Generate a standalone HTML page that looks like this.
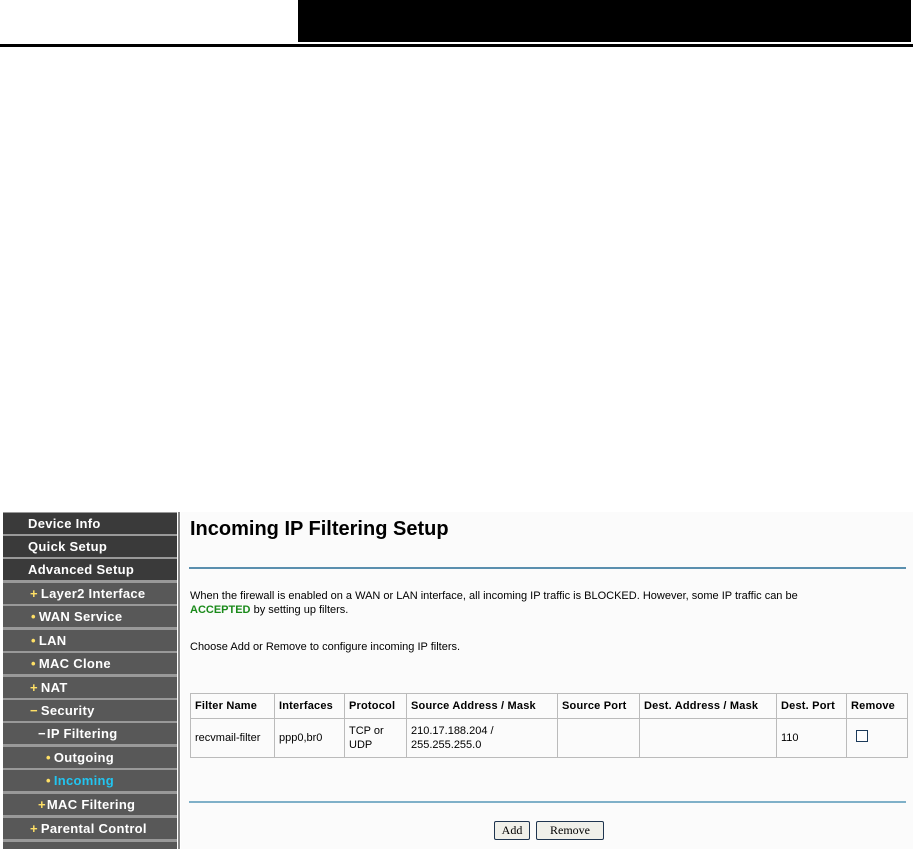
<!DOCTYPE html>
<html><head><style>
*{box-sizing:border-box}
body{margin:0;width:913px;height:849px;overflow:hidden;background:#fff;font-family:"Liberation Sans",sans-serif;position:relative}
.blk{position:absolute;left:298px;top:0;width:613px;height:42px;background:#000}
.ln{position:absolute;left:0;top:44px;width:913px;height:3px;background:#000}
.side{position:absolute;left:3px;top:512px;width:174px;height:337px;background:#999;overflow:hidden}
.it{position:absolute;left:0;width:174px;height:21px;color:#fff;font-weight:bold;font-size:13px;line-height:21px;white-space:nowrap;letter-spacing:0.3px}
.d{background:#3a3a3a}.m{background:#585858}
.b{color:#ffe066;margin-right:3px}
.vr{position:absolute;left:178px;top:512px;width:2px;height:337px;background:#888}
.main{position:absolute;left:181px;top:512px;width:732px;height:337px;background:#fbfbfb;font-size:11px;color:#000}
h1{position:absolute;left:9px;top:6px;margin:0;font-size:20px;font-weight:bold}
.hr{position:absolute;left:8px;width:717px;height:2px;background:#5a8fae}
.p{position:absolute;left:9px}
table{position:absolute;left:9px;top:181px;border-collapse:collapse;font-size:11px;table-layout:fixed;width:717px}
td,th{border:1px solid #bbb;padding:0 4px;text-align:left;vertical-align:middle;white-space:nowrap;overflow:hidden}
th{height:25px;letter-spacing:0.2px}
td{height:39px;line-height:14px}
.btn{position:absolute;top:309px;height:19px;border:1px solid #1f3550;border-radius:2px;background:#f0f0ea;font-family:"Liberation Serif",serif;font-size:12px;text-align:center;line-height:17px}
</style></head><body>
<div class="blk"></div><div class="ln"></div>
<div class="side">
<div class="it d" style="top:1px;padding-left:25px">Device Info</div>
<div class="it d" style="top:24px;padding-left:25px">Quick Setup</div>
<div class="it d" style="top:47px;padding-left:25px">Advanced Setup</div>
<div class="it m" style="top:71px;padding-left:27px"><span class="b">+</span>Layer2 Interface</div>
<div class="it m" style="top:94px;padding-left:28px"><span class="b">•</span>WAN Service</div>
<div class="it m" style="top:118px;padding-left:28px"><span class="b">•</span>LAN</div>
<div class="it m" style="top:141px;padding-left:28px"><span class="b">•</span>MAC Clone</div>
<div class="it m" style="top:165px;padding-left:27px"><span class="b">+</span>NAT</div>
<div class="it m" style="top:188px;padding-left:27px"><span class="b">−</span>Security</div>
<div class="it m" style="top:211px;padding-left:35px"><span style="margin-right:1px">−</span>IP Filtering</div>
<div class="it m" style="top:235px;padding-left:43px"><span class="b">•</span>Outgoing</div>
<div class="it m" style="top:258px;padding-left:43px;color:#22c4f0"><span class="b">•</span>Incoming</div>
<div class="it m" style="top:282px;padding-left:35px"><span class="b" style="margin-right:1px">+</span>MAC Filtering</div>
<div class="it m" style="top:306px;padding-left:27px"><span class="b">+</span>Parental Control</div>
<div class="it m" style="top:330px;padding-left:26px"></div>
</div>
<div class="vr"></div>
<div class="main">
<h1>Incoming IP Filtering Setup</h1>
<div class="hr" style="top:55px"></div>
<div class="p" style="top:77px;line-height:14px">When the firewall is enabled on a WAN or LAN interface, all incoming IP traffic is BLOCKED. However, some IP traffic can be<br><b style="color:#1a8a1a">ACCEPTED</b> by setting up filters.</div>
<div class="p" style="top:129px">Choose Add or Remove to configure incoming IP filters.</div>
<table>
<colgroup><col style="width:84px"><col style="width:70px"><col style="width:62px"><col style="width:151px"><col style="width:82px"><col style="width:137px"><col style="width:70px"><col style="width:61px"></colgroup>
<tr><th>Filter Name</th><th>Interfaces</th><th>Protocol</th><th>Source Address / Mask</th><th>Source Port</th><th>Dest. Address / Mask</th><th>Dest. Port</th><th>Remove</th></tr>
<tr><td>recvmail-filter</td><td>ppp0,br0</td><td>TCP or<br>UDP</td><td>210.17.188.204 /<br>255.255.255.0</td><td></td><td></td><td>110</td><td><span style="display:inline-block;width:12px;height:12px;border:1px solid #1c3a5a;background:#fff;margin-left:5px"></span></td></tr>
</table>
<div class="hr" style="top:289px;background:#7fb0c8"></div>
<div class="btn" style="left:313px;width:36px">Add</div>
<div class="btn" style="left:355px;width:68px">Remove</div>
</div>
</body></html>
